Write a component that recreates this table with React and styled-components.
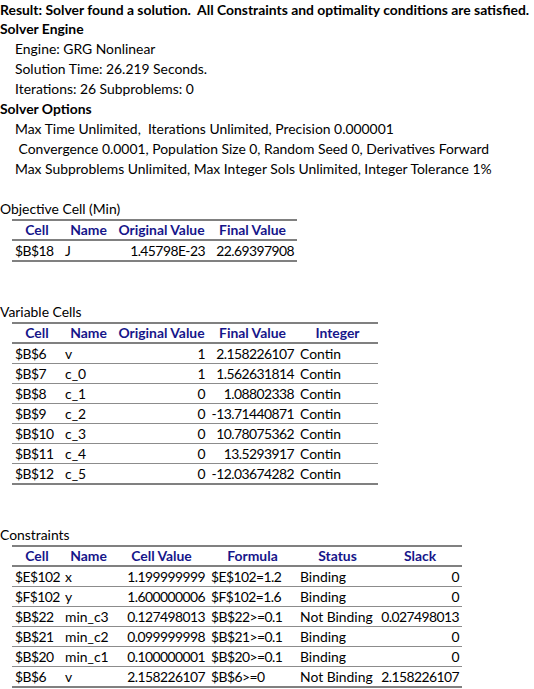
import styled, { createGlobalStyle } from "styled-components"
import * as React from "react"

const GlobalStyle = createGlobalStyle`
  body {
    margin: 0;
    background: #ffffff;
    color: #000000;
    font-family: Lato, "Open Sans", sans-serif;
    font-size: 13.9px;
  }
`

const engineLines = [
    "Engine: GRG Nonlinear",
    "Solution Time: 26.219 Seconds.",
    "Iterations: 26 Subproblems: 0",
]

const optionLines = [
    "Max Time Unlimited,  Iterations Unlimited, Precision 0.000001",
    " Convergence 0.0001, Population Size 0, Random Seed 0, Derivatives Forward",
    "Max Subproblems Unlimited, Max Integer Sols Unlimited, Integer Tolerance 1%",
]

const variableRows = [
    ["$B$6", "v", "1", "2.158226107", "Contin"],
    ["$B$7", "c_0", "1", "1.562631814", "Contin"],
    ["$B$8", "c_1", "0", "1.08802338", "Contin"],
    ["$B$9", "c_2", "0", "-13.71440871", "Contin"],
    ["$B$10", "c_3", "0", "10.78075362", "Contin"],
    ["$B$11", "c_4", "0", "13.5293917", "Contin"],
    ["$B$12", "c_5", "0", "-12.03674282", "Contin"],
]

const constraintRows = [
    ["$E$102", "x", "1.199999999", "$E$102=1.2", "Binding", "0"],
    ["$F$102", "y", "1.600000006", "$F$102=1.6", "Binding", "0"],
    ["$B$22", "min_c3", "0.127498013", "$B$22>=0.1", "Not Binding", "0.027498013"],
    ["$B$21", "min_c2", "0.099999998", "$B$21>=0.1", "Binding", "0"],
    ["$B$20", "min_c1", "0.100000001", "$B$20>=0.1", "Binding", "0"],
    ["$B$6", "v", "2.158226107", "$B$6>=0", "Not Binding", "2.158226107"],
]

// column widths + alignment, same as the sheet columns B..G
const cols = {
    cell: { w: 50, align: "left" },
    name: { w: 53, align: "left" },
    value: { w: 93, align: "right" },
    final: { w: 89, align: "right" },
    formula: { w: 89, align: "left" },
    status: { w: 81, align: "left" },
    slack: { w: 84, align: "right" },
}

// numbers and refs are narrower in the original font
const isNumeric = v => /^[-$\d.]/.test(v)

function Table({ headers, keys, rows }) {
    const total = keys.reduce((s, k) => s + cols[k].w, 0)
    return (
        <Grid style={{ width: total }}>
            <colgroup>
                {keys.map((k, i) => <col key={i} style={{ width: cols[k].w }} />)}
            </colgroup>
            <thead>
                <tr>
                    {headers.map(h => <Th key={h}>{h}</Th>)}
                </tr>
            </thead>
            <tbody>
                {rows.map((row, r) => (
                    <Tr key={r}>
                        {row.map((v, c) => (
                            <Td key={c} $align={cols[keys[c]].align} $tight={isNumeric(v)}>{v}</Td>
                        ))}
                    </Tr>
                ))}
            </tbody>
        </Grid>
    )
}

export default function App() {
    return (
        <Sheet>
            <GlobalStyle />
            <Line $bold $first>Result: Solver found a solution.  All Constraints and optimality conditions are satisfied.</Line>
            <Line $bold>Solver Engine</Line>
            {engineLines.map(l => <Line key={l} $indent>{l}</Line>)}
            <Line $bold>Solver Options</Line>
            {optionLines.map(l => <Line key={l} $indent>{l}</Line>)}
            <Blank />
            <Line>Objective Cell (Min)</Line>
            <Table
                headers={["Cell", "Name", "Original Value", "Final Value"]}
                keys={["cell", "name", "value", "final"]}
                rows={[["$B$18", "J", "1.45798E-23", "22.69397908"]]}
            />
            <Blank $rows={2} />
            <Line>Variable Cells</Line>
            <Table
                headers={["Cell", "Name", "Original Value", "Final Value", "Integer"]}
                keys={["cell", "name", "value", "final", "status"]}
                rows={variableRows}
            />
            <Blank $rows={2} />
            <Line>Constraints</Line>
            <Table
                headers={["Cell", "Name", "Cell Value", "Formula", "Status", "Slack"]}
                keys={["cell", "name", "value", "formula", "status", "slack"]}
                rows={constraintRows}
            />
        </Sheet>
    )
}

const Sheet = styled.div`
  display: flex;
  flex-direction: column;
  align-items: flex-start;
  width: 534px;
`

const Line = styled.div`
  height: ${p => p.$first ? 19 : 20}px;
  line-height: ${p => p.$first ? 19 : 20}px;
  padding-left: ${p => p.$indent ? 15 : 0}px;
  font-weight: ${p => p.$bold ? 700 : 400};
  white-space: pre;
`

const Blank = styled.div`
  height: ${p => (p.$rows || 1) * 20}px;
`

const Grid = styled.table`
  margin-left: 12px;
  border-collapse: collapse;
  table-layout: fixed;
  border-top: 2px solid #808080;
  border-bottom: 2px solid #808080;
`

const Th = styled.th`
  height: 18px;
  padding: 0;
  line-height: 18px;
  text-align: center;
  font-weight: 700;
  color: #16168a;
  white-space: nowrap;
  overflow: visible;
  border-bottom: 2px solid #808080;
`

const Tr = styled.tr`
  border-bottom: 1px solid #8c8c8c;
  &:last-child {
    border-bottom: none;
  }
`

const Td = styled.td`
  height: 19px;
  padding: 0 3px;
  line-height: 19px;
  text-align: ${p => p.$align};
  letter-spacing: ${p => p.$tight ? "-0.55px" : "0"};
  white-space: nowrap;
  overflow: visible;
`
